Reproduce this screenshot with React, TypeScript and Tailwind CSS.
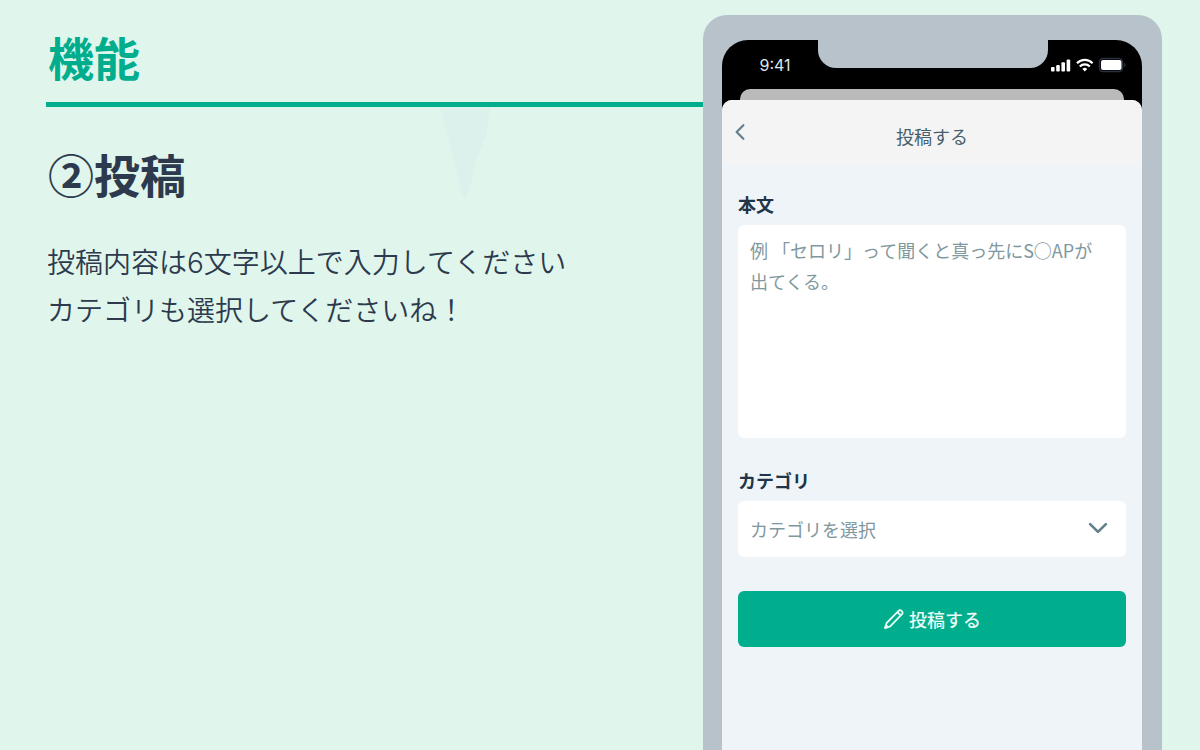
import React from 'react'
import { IoChevronBackOutline, IoChevronDownOutline } from 'react-icons/io5'

function StatusIcons() {
  return (
    <svg width="75" height="16" viewBox="0 0 75 16" aria-hidden="true">
      {/* Signal */}
      <g fill="#fff">
        <rect x="0" y="10" width="3.6" height="4.5" rx="1" />
        <rect x="5.2" y="8" width="3.6" height="6.5" rx="1" />
        <rect x="10.4" y="5.3" width="3.6" height="9.2" rx="1" />
        <rect x="15.6" y="2.6" width="3.6" height="11.9" rx="1" />
      </g>
      {/* Wifi */}
      <g fill="none" stroke="#fff" strokeWidth="2.2">
        <path d="M26 6.2a11 11 0 0 1 15.6 0" />
        <path d="M28.8 9.4a7 7 0 0 1 10 0" />
      </g>
      <path d="M33.8 14.6l-2.4-2.7a3.4 3.4 0 0 1 4.8 0z" fill="#fff" />
      {/* Battery */}
      <rect x="48.5" y="1.5" width="23" height="13" rx="3.5" fill="none" stroke="#2b3040" strokeWidth="1.5" />
      <rect x="50" y="3" width="20.5" height="10" rx="2" fill="#fff" />
      <path d="M73 6v4c1-.3 1.6-1 1.6-2s-.6-1.7-1.6-2z" fill="#2b3040" />
    </svg>
  )
}

function PencilIcon() {
  return (
    <svg
      width="22"
      height="22"
      viewBox="0 0 22 22"
      fill="none"
      stroke="currentColor"
      strokeWidth="1.8"
      strokeLinejoin="round"
      strokeLinecap="round"
      aria-hidden="true"
    >
      <path d="M2.2 20l1.4-5L15.6 2.8a2 2 0 0 1 2.9 0l.5.5a2 2 0 0 1 0 2.9L7.200 18.400z" />
      <path d="M14.6 4.300l2.900 2.900" />
      <path d="M2.2 20l.8-2.8 1.9 1.9z" fill="currentColor" />
    </svg>
  )
}

function PhoneMockup() {
  return (
    <div className="flex w-full shrink-0 flex-col rounded-t-[24px] bg-[#b7c2cb] pt-[25px] pr-5 pl-[19px] md:w-[459px]">
      <div className="flex grow flex-col overflow-hidden rounded-t-[26px] bg-black">
        {/* Status bar */}
        <div className="flex h-[49px] items-start text-white">
          <div className="flex h-full w-24 items-center justify-center pl-2.5 font-['Inter','Liberation_Sans',sans-serif] text-base text-[#dfe6ea]">
            9:41
          </div>
          <div className="h-7 min-w-0 flex-1 rounded-b-[18px] bg-[#b7c2cb]" />
          <div className="flex h-full w-[94px] items-center justify-end pr-4">
            <StatusIcons />
          </div>
        </div>

        {/* Sheet behind */}
        <div className="mx-[18px] h-[11px] rounded-t-[10px] bg-[#bababa]" />

        {/* Sheet */}
        <div className="flex grow flex-col overflow-hidden rounded-t-[10px] bg-[#eff4f9]">
          <header className="grid h-16 grid-cols-[1fr_auto_1fr] items-center bg-[#f4f4f4] px-1.5">
            <button type="button" aria-label="戻る" className="justify-self-start text-[#64808c]">
              <IoChevronBackOutline size={24} />
            </button>
            <h3 className="pt-2 text-lg text-[#465f6b]">投稿する</h3>
          </header>

          <form className="flex flex-col px-4 pt-[26px]">
            <label htmlFor="body" className="text-lg font-bold text-[#213547]">
              本文
            </label>
            <textarea
              id="body"
              placeholder="例 「セロリ」って聞くと真っ先にS○APが出てくる。"
              className="mt-[7px] h-[213px] w-full resize-none rounded-md bg-white py-2.5 pr-5 pl-3 text-lg leading-[31px] text-[#465f6b] placeholder:text-[#7f989e]"
            />

            <label htmlFor="category" className="mt-7 text-lg font-bold text-[#213547]">
              カテゴリ
            </label>
            <div className="relative mt-[7px]">
              <select
                id="category"
                className="h-14 w-full appearance-none rounded-md bg-white px-3 text-lg text-[#7f989e]"
              >
                <option>カテゴリを選択</option>
              </select>
              <IoChevronDownOutline
                size={28}
                className="pointer-events-none absolute top-[13px] right-3.5 text-[#64808c]"
              />
            </div>

            <button
              type="button"
              className="mt-[34px] flex h-14 items-center justify-center gap-1 rounded-md bg-[#00ae8e] text-lg font-medium text-[#e8fbf6]"
            >
              <PencilIcon />
              投稿する
            </button>
          </form>
        </div>
      </div>
    </div>
  )
}

export default function App() {
  return (
    <main className="flex min-h-screen flex-col bg-[#e0f6ec] pt-[15px] font-['Noto_Sans_CJK_JP',sans-serif] md:flex-row md:pr-[38px]">
      <section className="min-w-0 flex-1 pl-[46px] text-[#2d3a4e]">
        <h1 className="px-0.5 pt-2 pb-[13px] text-[46px] leading-[66px] font-bold text-[#00ae8e]">機能</h1>
        <div className="relative h-[5px] bg-[#00ae8e]">
          <svg
            width="50"
            height="94"
            viewBox="0 0 50 94"
            className="absolute top-[5px] left-[60%]"
            aria-hidden="true"
          >
            <path d="M0 0h50l-4 28-10 26-7 30-4 9-4-9-8-34-6-24z" fill="#dcf0ec" />
          </svg>
        </div>
        <h2 className="px-0.5 pt-[33px] text-[46px] leading-[66px] font-bold">②投稿</h2>
        <p className="px-px pt-[33px] font-['Inter','Noto_Sans_CJK_JP',sans-serif] text-[28px] leading-12 font-[350]">
          投稿内容は6文字以上で入力してください
          <br />
          カテゴリも選択してくださいね！
        </p>
      </section>

      <PhoneMockup />
    </main>
  )
}
